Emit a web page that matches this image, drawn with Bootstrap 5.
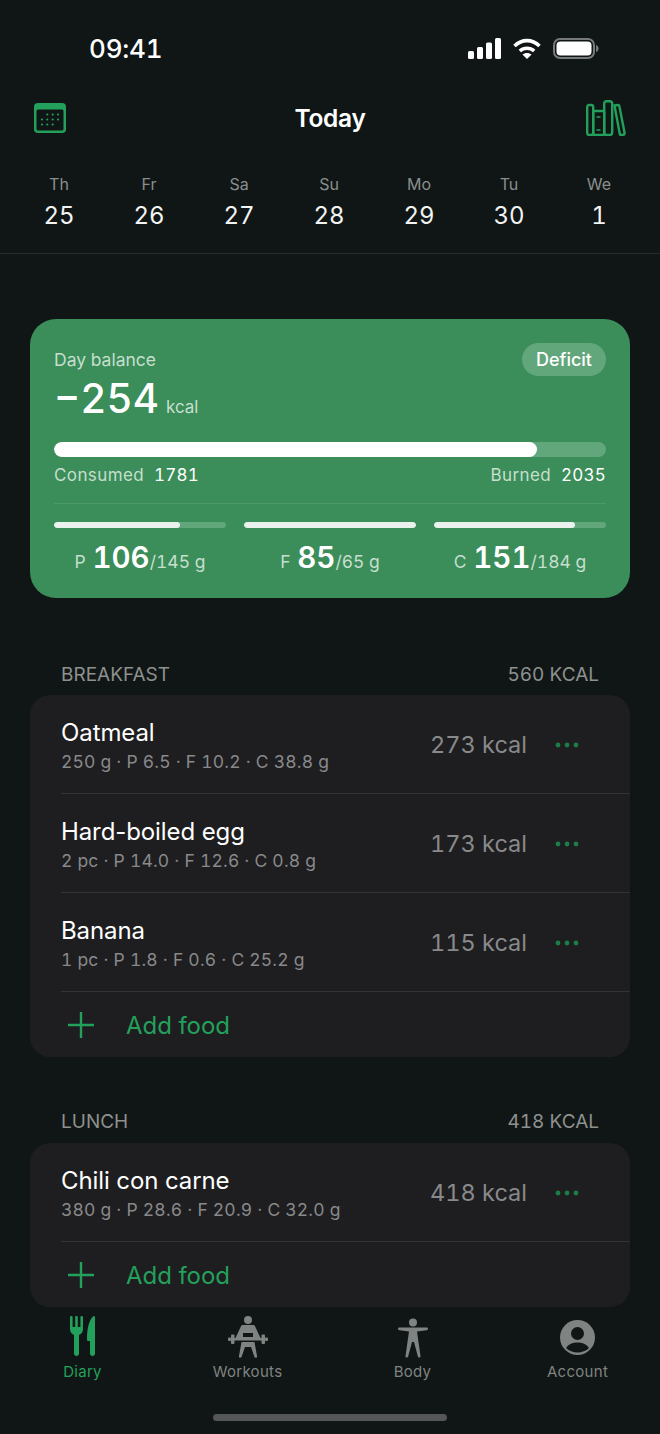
<!DOCTYPE html>
<html lang="en">
  <head>
    <meta charset="UTF-8" />
    <meta name="viewport" content="width=device-width, initial-scale=1.0" />
    <title>Diary</title>
    <link href="https://cdn.jsdelivr.net/npm/bootstrap@5.3.3/dist/css/bootstrap.min.css" rel="stylesheet" />
    <style>
      html, body { height: 1434px; }
      body { width: 660px; margin: 0; overflow: hidden; background: #101615; color: #fff; font-family: Inter, "Liberation Sans", sans-serif; font-variant-numeric: tabular-nums; font-feature-settings: "tnum" 1; }
      .screen { height: 1434px; }

      .status-bar { height: 92px; padding: 30px 61px 0 89px; }
      .status-time { font-size: 26px; font-weight: 500; line-height: 38px; letter-spacing: -0.200px; }
      .status-icons { padding-top: 8px; gap: 12px; }

      .top-bar { height: 52px; padding: 0 34px; }
      .top-side { width: 40px; }
      .top-title { font-size: 24.500px; font-weight: 600; letter-spacing: -0.300px; }

      .week { height: 110px; padding: 29px 14px 0; border-bottom: 1px solid #262b2a; }
      .week-day { width: 90px; text-align: center; }
      .week-name { font-size: 16px; line-height: 22px; color: #8a8e8d; }
      .week-num { font-size: 24px; line-height: 36px; margin-top: 3px; color: #f2f3f3; }

      .balance { margin: 65px 30px 0; height: 279px; padding: 24px 24px 0; background: #3b8d59; border-radius: 26px; }
      .balance-top { height: 33px; }
      .balance-label { font-size: 17.500px; line-height: 26px; color: #c6dfce; margin-top: 4px; }
      .balance-pill { font-size: 18px; font-weight: 500; line-height: 33px; padding: 0 14px; border-radius: 17px; background: #62a67c; }
      .balance-value { font-size: 40.500px; font-weight: 500; line-height: 48px; margin-top: -1px; }
      .balance-unit { font-size: 17px; font-weight: 400; color: #c6dfce; margin-left: 7px; }
      .track { background: #62a67c; overflow: hidden; }
      .track-fill { height: 100%; background: #fff; }
      .track-big { height: 15px; border-radius: 8px; margin-top: 11px; }
      .track-big .track-fill { border-radius: 8px; }
      .track-small { height: 6px; border-radius: 3px; }
      .track-small .track-fill { background: #e9f2ec; border-radius: 3px; }
      .balance-totals { font-size: 17px; line-height: 26px; margin-top: 5px; color: #c6dfce; letter-spacing: 0.400px; padding-bottom: 15px; border-bottom: 1px solid #4c9869; }
      .balance-totals b { font-weight: 400; color: #fff; margin-left: 5px; letter-spacing: 0.200px; }
      .macros { margin-top: 18px; gap: 18px; }
      .macro { flex: 1 1 0; }
      .macro-text { text-align: center; color: #c6dfce; font-size: 17.500px; line-height: 40px; margin-top: 9px; white-space: nowrap; }
      .macro-text b { color: #fff; font-size: 29.500px; font-weight: 600; margin-left: 2px; }

      .meal-head { margin: 0 30px; padding: 0 31px; height: 26px; font-size: 19px; line-height: 26px; color: #8d918f; }
      .head-first { margin-top: 64px; }
      .head-next { margin-top: 52px; }
      .meal-group { margin: 8px 30px 0; background: #1e1e20; border-radius: 20px; }
      .group-first { margin-top: 7px; }
      .food-row { height: 99px; padding-left: 31px; }
      .food-inner { height: 99px; padding: 4px 51px 0 0; border-bottom: 1px solid #333336; }
      .food-name { font-size: 24px; line-height: 30px; color: #fff; letter-spacing: -0.100px; font-feature-settings: normal; font-variant-numeric: normal; }
      .food-info { font-size: 17.500px; line-height: 26px; margin-top: 1px; color: #88898b; letter-spacing: 0.200px; }
      .food-kcal { font-size: 23.500px; color: #88898b; width: 120px; text-align: right; margin-right: 28px; margin-top: -3px; }
      .food-dots { margin-top: -3px; }
      .food-add { height: 65px; padding-left: 37px; color: #23a05b; font-size: 24px; gap: 23px; }
      .add-label { padding-top: 2px; }

      .tabs { margin-top: auto; height: 127px; padding: 9px 0 0; position: relative; }
      .tab { width: 165px; text-align: center; font-size: 15px; line-height: 20px; color: #7f8382; letter-spacing: 0.300px; }
      .tab-on { color: #23a05b; }
      .tab-icon { height: 45px; margin-bottom: 1px; }
      .tab-icon svg { display: inline-block; vertical-align: top; }
      .icon-body { margin-top: 2px; }
      .icon-account { margin-top: 4px; }
      .home-bar { position: absolute; left: 213px; top: 107px; width: 234px; height: 7px; border-radius: 4px; background: #555657; }
    </style>
  </head>
  <body>
    <main class="screen d-flex flex-column">
      <div class="status-bar d-flex justify-content-between align-items-start">
        <div class="status-time">09:41</div>
        <div class="status-icons d-flex align-items-center">
          <svg width="33" height="21" viewBox="0 0 33 21" fill="#fff">
            <rect x="0" y="13" width="6" height="8" rx="1.500" />
            <rect x="9" y="9" width="6" height="12" rx="1.500" />
            <rect x="18" y="4.500" width="6" height="16.500" rx="1.500" />
            <rect x="27" y="0" width="6" height="21" rx="1.500" />
          </svg>
          <svg width="28" height="21" viewBox="0 0 28 21" fill="none" stroke="#fff" stroke-width="3.600">
            <path d="M1.500 8C9 .8 19 .8 26.500 8" />
            <path d="M6.800 13C11 9.300 17 9.300 21.200 13" />
            <path d="M14 21 9.400 16.500C12 14.400 16 14.400 18.600 16.500Z" fill="#fff" stroke="none" />
          </svg>
          <svg width="46" height="21" viewBox="0 0 46 21">
            <rect x="1" y="1" width="40" height="19" rx="6" fill="none" stroke="#77797a" stroke-width="2" />
            <rect x="3.500" y="3.500" width="35" height="14" rx="4" fill="#fff" />
            <path d="M43 7v7c1.600-.5 2.600-2 2.600-3.500S44.600 7.500 43 7Z" fill="#77797a" />
          </svg>
        </div>
      </div>

      <div class="top-bar d-flex justify-content-between align-items-center">
        <div class="top-side d-flex justify-content-start">
          <svg width="32" height="30" viewBox="0 0 32 30">
            <rect width="32" height="30" rx="4" fill="#23a05b" />
            <rect x="2.500" y="6.500" width="27" height="21" rx="1.500" fill="#101615" />
            <g fill="#23a05b">
              <circle cx="13.300" cy="11.500" r="1.100" /><circle cx="18.700" cy="11.500" r="1.100" /><circle cx="24" cy="11.500" r="1.100" />
              <circle cx="8" cy="16.500" r="1.100" /><circle cx="13.300" cy="16.500" r="1.100" /><circle cx="18.700" cy="16.500" r="1.100" /><circle cx="24" cy="16.500" r="1.100" />
              <circle cx="8" cy="21.500" r="1.100" /><circle cx="13.300" cy="21.500" r="1.100" /><circle cx="18.700" cy="21.500" r="1.100" />
            </g>
          </svg>
        </div>
        <div class="top-title">Today</div>
        <div class="top-side d-flex justify-content-end">
          <svg width="40" height="36" viewBox="0 0 40 36" fill="none" stroke="#23a05b" stroke-width="2.400">
            <rect x="1.200" y="5" width="6" height="30" rx="2" />
            <rect x="7.200" y="11" width="11" height="24" rx="1" />
            <rect x="18.200" y="1.200" width="8" height="33.800" rx="2.500" />
            <path d="M28.500 5.500 32 5c.8 0 1.300.4 1.400 1.200L38.600 33c.1 1-.3 1.600-1.200 1.700l-2 .3c-.9.1-1.400-.3-1.600-1.100L28.500 5.500Z" />
            <path d="M10.500 17h4M10.500 30h4" stroke-width="1.500" />
          </svg>
        </div>
      </div>

      <div class="week d-flex">
        <div class="week-day"><div class="week-name">Th</div><div class="week-num">25</div></div>
        <div class="week-day"><div class="week-name">Fr</div><div class="week-num">26</div></div>
        <div class="week-day"><div class="week-name">Sa</div><div class="week-num">27</div></div>
        <div class="week-day"><div class="week-name">Su</div><div class="week-num">28</div></div>
        <div class="week-day"><div class="week-name">Mo</div><div class="week-num">29</div></div>
        <div class="week-day"><div class="week-name">Tu</div><div class="week-num">30</div></div>
        <div class="week-day"><div class="week-name">We</div><div class="week-num">1</div></div>
      </div>

      <section class="balance">
        <div class="balance-top d-flex justify-content-between align-items-start">
          <div class="balance-label">Day balance</div>
          <div class="balance-pill">Deficit</div>
        </div>
        <div class="balance-value">−254<span class="balance-unit">kcal</span></div>
        <div class="track track-big"><div class="track-fill" style="width: 87.500%"></div></div>
        <div class="balance-totals d-flex justify-content-between">
          <div>Consumed <b>1781</b></div>
          <div>Burned <b>2035</b></div>
        </div>
        <div class="macros d-flex">
          <div class="macro">
            <div class="track track-small"><div class="track-fill" style="width: 73%"></div></div>
            <div class="macro-text">P <b>106</b>/145 g</div>
          </div>
          <div class="macro">
            <div class="track track-small"><div class="track-fill" style="width: 100%"></div></div>
            <div class="macro-text">F <b>85</b>/65 g</div>
          </div>
          <div class="macro">
            <div class="track track-small"><div class="track-fill" style="width: 82%"></div></div>
            <div class="macro-text">C <b>151</b>/184 g</div>
          </div>
        </div>
      </section>

      <div class="meal-head head-first d-flex justify-content-between"><span>BREAKFAST</span><span>560 KCAL</span></div>
      <section class="meal-group group-first">
        <div class="food-row">
          <div class="food-inner d-flex align-items-center">
            <div class="flex-grow-1"><div class="food-name">Oatmeal</div><div class="food-info">250 g · P 6.5 · F 10.2 · C 38.8 g</div></div>
            <div class="food-kcal">273 kcal</div>
            <svg class="food-dots" width="24" height="6" viewBox="0 0 24 6" fill="#1b7d47"><circle cx="3" cy="3" r="2.400" /><circle cx="12" cy="3" r="2.400" /><circle cx="21" cy="3" r="2.400" /></svg>
          </div>
        </div>
        <div class="food-row">
          <div class="food-inner d-flex align-items-center">
            <div class="flex-grow-1"><div class="food-name">Hard-boiled egg</div><div class="food-info">2 pc · P 14.0 · F 12.6 · C 0.8 g</div></div>
            <div class="food-kcal">173 kcal</div>
            <svg class="food-dots" width="24" height="6" viewBox="0 0 24 6" fill="#1b7d47"><circle cx="3" cy="3" r="2.400" /><circle cx="12" cy="3" r="2.400" /><circle cx="21" cy="3" r="2.400" /></svg>
          </div>
        </div>
        <div class="food-row">
          <div class="food-inner d-flex align-items-center">
            <div class="flex-grow-1"><div class="food-name">Banana</div><div class="food-info">1 pc · P 1.8 · F 0.6 · C 25.2 g</div></div>
            <div class="food-kcal">115 kcal</div>
            <svg class="food-dots" width="24" height="6" viewBox="0 0 24 6" fill="#1b7d47"><circle cx="3" cy="3" r="2.400" /><circle cx="12" cy="3" r="2.400" /><circle cx="21" cy="3" r="2.400" /></svg>
          </div>
        </div>
        <div class="food-add d-flex align-items-center">
          <svg width="28" height="28" viewBox="0 0 28 28" stroke="#23a05b" stroke-width="2.400"><path d="M1 14h26M14 1v26" /></svg>
          <span class="add-label ms-2">Add food</span>
        </div>
      </section>

      <div class="meal-head head-next d-flex justify-content-between"><span>LUNCH</span><span>418 KCAL</span></div>
      <section class="meal-group">
        <div class="food-row">
          <div class="food-inner d-flex align-items-center">
            <div class="flex-grow-1"><div class="food-name">Chili con carne</div><div class="food-info">380 g · P 28.6 · F 20.9 · C 32.0 g</div></div>
            <div class="food-kcal">418 kcal</div>
            <svg class="food-dots" width="24" height="6" viewBox="0 0 24 6" fill="#1b7d47"><circle cx="3" cy="3" r="2.400" /><circle cx="12" cy="3" r="2.400" /><circle cx="21" cy="3" r="2.400" /></svg>
          </div>
        </div>
        <div class="food-add d-flex align-items-center">
          <svg width="28" height="28" viewBox="0 0 28 28" stroke="#23a05b" stroke-width="2.400"><path d="M1 14h26M14 1v26" /></svg>
          <span class="add-label ms-2">Add food</span>
        </div>
      </section>

      <nav class="tabs d-flex justify-content-start">
        <div class="tab tab-on">
          <div class="tab-icon">
            <svg width="25" height="40" viewBox="0 0 25 40" fill="#23a05b">
              <path d="M1.300 0C2 0 2.600.5 2.600 1.200V11H5.200V1.200C5.200.5 5.800 0 6.500 0S7.800.5 7.800 1.200V11H10.400V1.200C10.400.5 11 0 11.700 0S13 .5 13 1.200V13C13 16 11.500 18 9 19V37.500C9 39 8 40 6.500 40S4 39 4 37.500V19C1.500 18 0 16 0 13V1.200C0 .5.600 0 1.300 0Z" />
              <path d="M23.500 0C24.300 0 25 .5 25 1.200V37.500C25 39 24 40 22.500 40S20 39 20 37.500V25H18.500C17.500 25 17 24.500 17 23.500 17 12 19 4 23.500 0Z" />
            </svg>
          </div>
          <div>Diary</div>
        </div>
        <div class="tab">
          <div class="tab-icon">
            <svg width="40" height="42" viewBox="0 0 40 42" fill="#7f8382">
              <circle cx="20" cy="4" r="4" />
              <path d="M15 9h10c1 0 1.600.4 2 1.200L32.500 22H7.500L13 10.200C13.400 9.400 14 9 15 9Z" />
              <rect x="15" y="17" width="10" height="4" fill="#101615" />
              <rect x="6" y="22" width="28" height="2.500" />
              <rect x="3" y="18.500" width="3.500" height="9.500" rx="1" />
              <rect x="33.500" y="18.500" width="3.500" height="9.500" rx="1" />
              <rect x="0" y="21.500" width="3" height="3.500" rx="1" />
              <rect x="37" y="21.500" width="3" height="3.500" rx="1" />
              <path d="M13.500 26h13L29 40c.2 1-.3 1.700-1.200 1.700-.8 0-1.300-.4-1.500-1.200L23 31h-6L13.700 40.500c-.2.8-.7 1.200-1.500 1.200-.9 0-1.400-.7-1.200-1.700Z" />
            </svg>
          </div>
          <div>Workouts</div>
        </div>
        <div class="tab">
          <div class="tab-icon">
            <svg class="icon-body" width="30" height="40" viewBox="0 0 30 40" fill="#7f8382">
              <circle cx="15" cy="4.500" r="4" />
              <path d="M1.500 9.500 28.500 9.500c1 0 1.500.5 1.500 1.300s-.5 1.300-1.500 1.400L19 13.500 22.500 38c.1 1-.4 1.500-1.200 1.500-.8 0-1.300-.4-1.500-1.200L16 24h-2l-3.800 14.300c-.2.800-.7 1.200-1.500 1.200-.8 0-1.300-.5-1.200-1.500L11 13.500 1.500 12.200C.5 12.100 0 11.600 0 10.800s.5-1.300 1.500-1.300Z" />
            </svg>
          </div>
          <div>Body</div>
        </div>
        <div class="tab">
          <div class="tab-icon">
            <svg class="icon-account" width="35" height="35" viewBox="0 0 35 35">
              <circle cx="17.500" cy="17.500" r="17.500" fill="#7f8382" />
              <circle cx="17.500" cy="13.500" r="6.500" fill="#101615" />
              <path d="M6 28c2.500-3.800 6.500-5.500 11.500-5.500S26.500 24.200 29 28c-3 2.800-7 4.500-11.500 4.500S9 30.800 6 28Z" fill="#101615" />
            </svg>
          </div>
          <div>Account</div>
        </div>
        <div class="home-bar"></div>
      </nav>
    </main>
    <script src="https://cdn.jsdelivr.net/npm/bootstrap@5.3.3/dist/js/bootstrap.bundle.min.js"></script>
  </body>
</html>
